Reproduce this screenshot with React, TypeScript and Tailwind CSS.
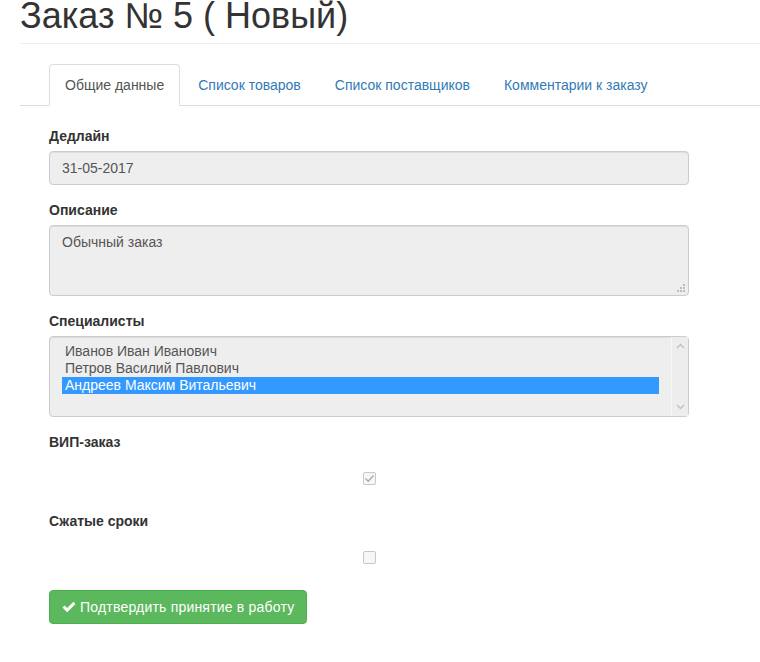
import React from "react";

const font = { fontFamily: '"Liberation Sans", Arial, sans-serif' };

function Label({ children }: { children: React.ReactNode }) {
  return <div className="mb-[5px] text-[14px] leading-[20px] font-bold text-[#333]">{children}</div>;
}

function Checkbox({ checked }: { checked: boolean }) {
  return (
    <div className="flex h-[39px] items-center justify-center pt-[4px]">
      <div className="flex h-[13px] w-[13px] items-center justify-center rounded-[2px] border border-[#c8c8c8] bg-[#f7f7f7]">
        {checked && (
          <svg width="11" height="11" viewBox="0 0 11 11">
            <path d="M1.5 5.5 L4.2 8.2 L9.5 2.5" fill="none" stroke="#a9a9a9" strokeWidth="1.3" />
          </svg>
        )}
      </div>
    </div>
  );
}

export default function App() {
  const tabs = ["Общие данные", "Список товаров", "Список поставщиков", "Комментарии к заказу"];
  return (
    <div className="min-h-[662px] w-[760px] overflow-hidden bg-white pl-[20px] text-[14px] text-[#333]" style={font}>
      <div className="border-b border-[#eee] pb-[7px]">
        <h1 className="mt-[-4px] text-[36px] leading-[40px] font-normal text-[#333]">Заказ № 5 ( Новый)</h1>
      </div>

      <ul className="mt-[20px] flex border-b border-[#ddd] pl-[29px]">
        {tabs.map((t, i) => (
          <li key={t} className="mr-[2px] mb-[-1px]">
            {i === 0 ? (
              <div className="rounded-t-[4px] border border-[#ddd] border-b-white bg-white px-[15px] py-[10px] leading-[20px] text-[#555]">
                {t}
              </div>
            ) : (
              <div className="border border-transparent px-[15px] py-[10px] leading-[20px] text-[#337ab7]">{t}</div>
            )}
          </li>
        ))}
      </ul>

      <div className="w-[669px] pt-[20px] pl-[29px]">
        <div className="mb-[15px]">
          <Label>Дедлайн</Label>
          <div className="h-[34px] rounded-[4px] border border-[#ccc] bg-[#eee] px-[12px] py-[6px] leading-[20px] text-[#555] shadow-[inset_0_1px_1px_rgba(0,0,0,0.075)]">
            31-05-2017
          </div>
        </div>

        <div className="mb-[15px]">
          <Label>Описание</Label>
          <div className="relative h-[71px] rounded-[4px] border border-[#ccc] bg-[#eee] px-[12px] py-[6px] leading-[20px] text-[#555] shadow-[inset_0_1px_1px_rgba(0,0,0,0.075)]">
            Обычный заказ
            <svg className="absolute right-[3px] bottom-[3px]" width="8" height="8" viewBox="0 0 8 8">
              <rect x="6" y="0" width="2" height="2" fill="#bdbdbd" />
              <rect x="3" y="3" width="2" height="2" fill="#bdbdbd" />
              <rect x="6" y="3" width="2" height="2" fill="#bdbdbd" />
              <rect x="0" y="6" width="2" height="2" fill="#bdbdbd" />
              <rect x="3" y="6" width="2" height="2" fill="#bdbdbd" />
              <rect x="6" y="6" width="2" height="2" fill="#bdbdbd" />
            </svg>
          </div>
        </div>

        <div className="mb-[15px]">
          <Label>Специалисты</Label>
          <div className="flex h-[81px] rounded-[4px] border border-[#ccc] bg-[#eee] shadow-[inset_0_1px_1px_rgba(0,0,0,0.075)]">
            <div className="flex-1 py-[6px] pl-[12px] pr-[12px] text-[14px] leading-[17px] text-[#555]">
              <div className="px-[3px]">Иванов Иван Иванович</div>
              <div className="px-[3px]">Петров Василий Павлович</div>
              <div className="bg-[#3399ff] px-[3px] text-white">Андреев Максим Витальевич</div>
            </div>
            <div className="flex w-[17px] flex-col items-center justify-between border-l border-[#f8f8f8] bg-[#ededed] py-[6px]">
              <svg width="9" height="6" viewBox="0 0 9 6">
                <path d="M1 5 L4.5 1.5 L8 5" fill="none" stroke="#c3c3c3" strokeWidth="1.5" />
              </svg>
              <svg width="9" height="6" viewBox="0 0 9 6">
                <path d="M1 1 L4.5 4.5 L8 1" fill="none" stroke="#c3c3c3" strokeWidth="1.5" />
              </svg>
            </div>
          </div>
        </div>

        <div className="mb-[15px]">
          <Label>ВИП-заказ</Label>
          <Checkbox checked />
        </div>

        <div className="mb-[15px]">
          <Label>Сжатые сроки</Label>
          <Checkbox checked={false} />
        </div>

        <button className="flex h-[34px] w-[258px] items-center gap-[4px] rounded-[4px] border border-[#4cae4c] bg-[#5cb85c] pl-[12px] text-[14px] leading-[20px] text-white">
          <svg width="14" height="12" viewBox="0 0 14 12">
            <path d="M0.5 6.5 L2.6 4.4 L5.2 7 L11.4 0.8 L13.5 2.9 L5.2 11.2 Z" fill="white" />
          </svg>
          <span className="tracking-[0.2px]">Подтвердить принятие в работу</span>
        </button>
      </div>
    </div>
  );
}
